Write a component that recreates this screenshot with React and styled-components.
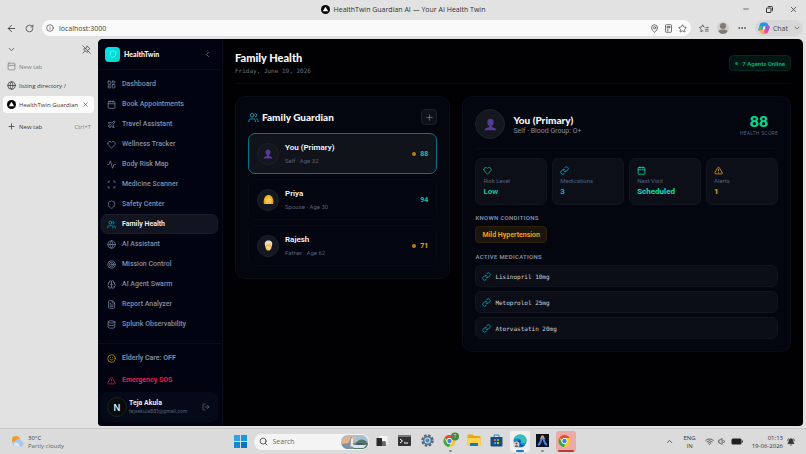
import React from "react";
import styled, { createGlobalStyle, css } from "styled-components";
import {
  Shield, ChevronLeft, ChevronDown, ChevronUp, LayoutDashboard, Calendar, Plane, Heart, Activity, Scan,
  Users, Globe, Target, Brain, FileText, Database, Smile, TriangleAlert, LogOut, Plus, Link,
  ArrowLeft, RotateCw, Info, MapPin, Star, Ellipsis, Minus, X, Search, Wifi, Volume1,
  PanelTop, BellRing,
} from "lucide-react";

const GlobalStyle = createGlobalStyle`
  * { box-sizing: border-box; }
  html, body { margin: 0; padding: 0; }
  body { background: #e3e2e2; font-family: Roboto, Inter, sans-serif; overflow: hidden; }
  button, input { font: inherit; color: inherit; border: 0; background: none; padding: 0; margin: 0; }
  h1, h2, h3, p, ul, dl, dd { margin: 0; padding: 0; }
  ul { list-style: none; }
  a { color: inherit; text-decoration: none; }
  svg { flex: none; display: block; }
`;

const system = css`font-family: "Open Sans", "Noto Sans", sans-serif;`;
const display = css`font-family: Lato, Inter, sans-serif; font-weight: 900;`;
const mono = css`font-family: "DejaVu Sans Mono", "Liberation Mono", monospace;`;

const Desktop = styled.div`
  min-height: 100vh;
  display: flex;
  flex-direction: column;
  color: #333;
`;

/* Browser window */
const TitleBar = styled.header`
  ${system}
  height: 18px;
  display: grid;
  grid-template-columns: 1fr auto 1fr;
  align-items: center;
`;
const WindowTitle = styled.div`
  grid-column: 2;
  display: flex;
  align-items: center;
  gap: 4px;
  font-size: 7px;
  color: #303030;
`;
const WindowButtons = styled.div`
  display: flex;
  justify-content: flex-end;
  align-items: center;
  gap: 16px;
  padding-right: 8px;
  color: #333;
`;
const IconButton = styled.button`
  display: inline-flex;
  align-items: center;
  justify-content: center;
  flex: none;
  color: inherit;
`;
const Toolbar = styled.div`
  ${system}
  height: 21px;
  display: flex;
  align-items: center;
  gap: 8px;
  padding: 1px 3px 2px 6px;
  color: #444;
`;
const AddressBar = styled.div`
  flex: 1;
  height: 16px;
  display: flex;
  align-items: center;
  gap: 5px;
  padding: 0 4px;
  border-radius: 8px;
  background: #fafafa;
  font-size: 7px;
`;
const AddressInput = styled.input`
  flex: 1;
  min-width: 0;
  outline: 0;
  color: #444;
`;
const Profile = styled.span`
  width: 12px;
  height: 12px;
  border-radius: 50%;
  background: #cfcccb;
`;
const ChatButton = styled.button`
  height: 16px;
  display: flex;
  align-items: center;
  gap: 3px;
  padding: 0 2px 0 3px;
  border-radius: 8px;
  background: #d8d7d8;
  font-size: 7px;
  color: #444;
`;
const ChatLabel = styled.span`margin-right: 2px;`;

const BrowserBody = styled.div`
  flex: 1;
  min-height: 0;
  display: flex;
  padding-right: 3px;
`;
const TabPane = styled.aside`
  ${system}
  width: 98px;
  flex: none;
  padding: 2px 3px 0;
  font-size: 6px;
`;
const TabPaneTop = styled.div`
  display: flex;
  justify-content: space-between;
  align-items: center;
  height: 17px;
  padding: 0 4px;
  color: #444;
`;
const Tab = styled.button`
  width: 91px;
  height: 17px;
  display: flex;
  align-items: center;
  gap: 3px;
  padding: 0 5px 0 4px;
  margin-bottom: 2px;
  border-radius: 4px;
  color: ${(p) => (p.$faded ? "#808080" : "#383838")};
  background: ${(p) => (p.$active ? "#fcfcfc" : "transparent")};
`;
const TabLabel = styled.span`
  flex: 1;
  text-align: left;
  white-space: nowrap;
`;
const Shortcut = styled.span`color: #808080;`;
const NewTab = styled(Tab)`
  margin-top: 5px;
  padding-right: 3px;
`;

/* Application */
const AppFrame = styled.div`
  flex: 1;
  min-width: 0;
  display: flex;
  background: #010103;
  border-radius: 5px 5px 4px 4px;
  overflow: hidden;
  margin-bottom: 2px;
`;
const SideNav = styled.nav`
  width: 125px;
  flex: none;
  display: flex;
  flex-direction: column;
  background: #010311;
  border-right: 1px solid #080b17;
`;
const Brand = styled.div`
  height: 31px;
  display: flex;
  align-items: center;
  gap: 4px;
  padding: 0 10px 0 7px;
  border-bottom: 1px solid #090c1a;
  color: #6b778c;
`;
const BrandMark = styled.span`
  width: 15px;
  height: 15px;
  display: grid;
  place-items: center;
  border-radius: 4px;
  color: #8afaf4;
  background: linear-gradient(135deg, #00e1f2, #00dbc4);
`;
const BrandName = styled.span`
  ${display}
  flex: 1;
  font-size: 7px;
  color: #f4f6fb;
`;
const NavList = styled.ul`
  padding: 4px 4px 0 3px;
  flex: 1;
`;
const NavLink = styled.a`
  height: 20px;
  display: flex;
  align-items: center;
  gap: 6px;
  padding: 0 5px;
  border: 1px solid ${(p) => (p.$active ? "#1a1d29" : "transparent")};
  border-radius: 6px;
  background: ${(p) => (p.$active ? "#12151f" : "transparent")};
  color: ${(p) => (p.$active ? "#eff2f8" : "#8290a7")};
  font-size: 7px;
  line-height: 10px;
  font-weight: ${(p) => (p.$active ? 600 : 500)};
  svg { color: ${(p) => (p.$active ? "#06a9c4" : "#76849b")}; }
`;
const NavFooter = styled.div`
  border-top: 1px solid #090c1a;
  padding: 3px 4px 4px 3px;
`;
const FooterAction = styled.button`
  width: 100%;
  height: 22px;
  display: flex;
  align-items: center;
  gap: 6px;
  padding: 0 6px;
  font-size: 7px;
  font-weight: ${(p) => (p.$alert ? 700 : 600)};
  color: ${(p) => (p.$alert ? "#f0174e" : "#8290a7")};
  svg { color: ${(p) => (p.$alert ? "#d81745" : "#d39a0c")}; }
`;
const UserCard = styled.div`
  height: 30px;
  display: flex;
  align-items: center;
  gap: 2px;
  padding: 0 8px 0 6px;
  margin-top: 1px;
  border-radius: 6px;
  background: #060a18;
  color: #647087;
`;
const UserBadge = styled.span`
  width: 20px;
  height: 20px;
  flex: none;
  display: grid;
  place-items: center;
  border-radius: 50%;
  border: 1px solid #1c2420;
  background: #080b09;
  color: #fff;
  font-family: Inter, sans-serif;
  font-size: 9px;
  font-weight: 500;
`;
const UserText = styled.div`
  flex: 1;
  min-width: 0;
  font-family: Inter, sans-serif;
  font-size: 5px;
  line-height: 8px;
  color: #56637c;
  white-space: nowrap;
`;
const UserName = styled.div`
  font-family: Roboto, sans-serif;
  font-size: 7px;
  font-weight: 600;
  color: #f3f5fa;
`;

const Main = styled.main`
  flex: 1;
  min-width: 0;
  padding: 0 12px;
`;
const PageHeader = styled.header`
  height: 45px;
  display: flex;
  justify-content: space-between;
  align-items: center;
  padding-top: 4px;
  border-bottom: 1px solid #080a11;
`;
const PageTitle = styled.h1`
  ${display}
  font-size: 11px;
  line-height: 14px;
  color: #f6f8fc;
`;
const PageDate = styled.p`
  ${mono}
  font-size: 6px;
  line-height: 11px;
  color: #647188;
`;
const OnlineBadge = styled.span`
  height: 16px;
  display: flex;
  align-items: center;
  gap: 4px;
  padding: 0 5px;
  border: 1px solid #032a20;
  border-radius: 4px;
  background: #011612;
  color: #05b57b;
  font-size: 6px;
  font-weight: 600;
`;
const Dot = styled.span`
  width: ${(p) => p.$size}px;
  height: ${(p) => p.$size}px;
  border-radius: 50%;
  background: ${(p) => p.$color};
`;
const Columns = styled.div`
  display: grid;
  grid-template-columns: 215fr 328fr;
  align-items: start;
  gap: 12px;
  padding-top: 12px;
`;
const Panel = styled.section`
  padding: 12px;
  border: 1px solid #0a0d1a;
  border-radius: 10px;
  background: #04060f;
`;
const PanelHeader = styled.div`
  display: flex;
  align-items: center;
  gap: 3px;
  height: 16px;
  margin-bottom: 8px;
  color: #06a9c4;
`;
const PanelTitle = styled.h2`
  ${display}
  flex: 1;
  font-size: 10px;
  line-height: 14px;
  color: #f4f6fb;
`;
const AddButton = styled(IconButton)`
  width: 16px;
  height: 16px;
  border: 1px solid #191d28;
  border-radius: 4px;
  background: #0e111b;
  color: #06a9c4;
`;
const MemberList = styled.div`
  display: flex;
  flex-direction: column;
  gap: 5px;
`;
const MemberRow = styled.button`
  width: 100%;
  height: 41px;
  display: flex;
  align-items: center;
  gap: 6px;
  padding: 0 8px;
  border: 1px solid ${(p) => (p.$selected ? "#087387" : "#080b14")};
  border-radius: 7px;
  background: ${(p) => (p.$selected ? "#11131b" : "#030510")};
  text-align: left;
`;
const Avatar = styled.span`
  width: ${(p) => p.$size}px;
  height: ${(p) => p.$size}px;
  flex: none;
  display: grid;
  place-items: center;
  border: 1px solid #20222b;
  border-radius: 50%;
  background: #15171f;
`;
const MemberText = styled.span`
  flex: 1;
  font-size: 6px;
  color: #566177;
`;
const MemberName = styled.span`
  display: block;
  margin-bottom: 4px;
  font-size: 8px;
  line-height: 10px;
  font-weight: 600;
  color: #f5f7fb;
`;
const Score = styled.span`
  display: flex;
  align-items: center;
  gap: 4px;
  font-size: 7px;
  font-weight: 800;
  color: ${(p) => p.$color};
`;
const ProfileHeader = styled.div`
  height: 40px;
  display: flex;
  align-items: flex-start;
  gap: 8px;
  border-bottom: 1px solid #080b14;
`;
const ProfileText = styled.div`
  flex: 1;
  padding-top: 5px;
`;
const ProfileName = styled(PanelTitle)`line-height: 13px;`;
const ProfileMeta = styled.p`
  font-size: 7px;
  line-height: 9px;
  color: #8490a6;
`;
const HealthScore = styled.div`
  padding-top: 4px;
  text-align: center;
  font-size: 5px;
  line-height: 7px;
  letter-spacing: 0.05em;
  color: #566177;
`;
const ScoreNumber = styled.div`
  font-family: Inter, sans-serif;
  font-size: 14px;
  line-height: 17px;
  font-weight: 800;
  letter-spacing: normal;
  color: #0ad08e;
`;
const StatGrid = styled.dl`
  display: grid;
  grid-template-columns: repeat(4, 1fr);
  gap: 5px;
  padding-top: 9px;
`;
const Stat = styled.div`
  height: 47px;
  padding: 7px;
  border: 1px solid #11141e;
  border-radius: 6px;
  background: #0c0f18;
  color: ${(p) => p.$color};
`;
const StatLabel = styled.dt`
  margin-top: 2px;
  font-size: 6px;
  line-height: 8px;
  color: #566177;
`;
const StatValue = styled.dd`
  margin-top: 1px;
  font-size: 8px;
  line-height: 11px;
  font-weight: 700;
`;
const SectionTitle = styled.h3`
  margin: ${(p) => p.$top}px 0 4px;
  font-size: 6px;
  line-height: 8px;
  font-weight: 600;
  letter-spacing: 0.05em;
  color: #8490a6;
`;
const Condition = styled.div`
  width: fit-content;
  display: flex;
  align-items: center;
  height: 17px;
  padding: 0 6px;
  border: 1px solid #302109;
  border-radius: 4px;
  background: #1c150e;
  color: #f2ab0c;
  font-size: 7px;
  font-weight: 600;
`;
const MedicationList = styled.ul`
  display: grid;
  gap: 4px;
`;
const Medication = styled.li`
  ${mono}
  height: 22px;
  display: flex;
  align-items: center;
  gap: 4px;
  padding: 0 6px;
  border: 1px solid #11141e;
  border-radius: 6px;
  background: #0b0e17;
  color: #ccd3df;
  font-size: 6px;
  svg { color: #08aecb; }
`;

/* Taskbar */
const Taskbar = styled.footer`
  ${system}
  height: 26px;
  display: grid;
  grid-template-columns: 1fr auto 1fr;
  align-items: center;
  padding: 0 11px;
  background: #dcdbdb;
  border-top: 1px solid #cbc8ca;
  font-size: 6px;
  line-height: 8px;
`;
const Weather = styled.div`
  display: flex;
  align-items: center;
  gap: 3px;
  color: #333;
`;
const Muted = styled.div`color: #666;`;
const TaskItems = styled.div`
  display: flex;
  align-items: center;
  gap: 3px;
`;
const TaskButton = styled(IconButton)`
  width: 20px;
  height: 21px;
  flex-direction: column;
  justify-content: flex-end;
  border-radius: 3px;
  background: ${(p) => p.$fill || "transparent"};
`;
const TaskGlyph = styled.span`
  flex: 1;
  display: grid;
  place-items: center;
`;
const TaskMark = styled.span`
  width: ${(p) => p.$width || 0}px;
  height: 2px;
  border-radius: 1px;
  background: ${(p) => p.$color || "transparent"};
`;
const TaskSearch = styled.label`
  width: 115px;
  height: 16px;
  display: flex;
  align-items: center;
  gap: 5px;
  padding: 0 1px 0 5px;
  border-radius: 8px;
  background: #f5f4f4;
  color: #333;
  font-size: 7px;
`;
const TaskSearchInput = styled.input`
  flex: 1;
  min-width: 0;
  outline: 0;
  &::placeholder { color: #666; opacity: 1; }
`;
const Tray = styled.div`
  display: flex;
  justify-content: flex-end;
  align-items: center;
  gap: 4px;
  color: #333;
`;
const Language = styled.div`
  text-align: center;
  padding: 0 5px;
`;
const Clock = styled.div`
  text-align: right;
  padding-left: 5px;
`;

/* Drawings */
const Triangle = ({ size = 9 }) => (
  <svg width={size} height={size} viewBox="0 0 20 20">
    <circle cx="10" cy="10" r="10" fill="#050505" />
    <path d="M10 4l6 10H4z" fill="#fff" />
  </svg>
);
const Unpin = () => (
  <svg width="9" height="9" viewBox="0 0 24 24" fill="none" stroke="currentColor" strokeWidth="2" strokeLinejoin="round" strokeLinecap="round">
    <path d="M2 2l20 20M14 3l7 7-6 4-2 6-9-9 6-2zM8 16l-6 6" />
  </svg>
);
const Restore = () => (
  <svg width="7" height="7" viewBox="0 0 14 14" fill="none" stroke="currentColor" strokeWidth="2">
    <rect x="1" y="4" width="9" height="9" rx="1" /><path d="M4 2q0-1 1-1h6q2 0 2 2v6q0 1-1 1" />
  </svg>
);
const Reader = () => (
  <svg width="9" height="9" viewBox="0 0 24 24" fill="none" stroke="currentColor" strokeWidth="2">
    <rect x="4" y="2" width="16" height="20" rx="2" /><path d="M8 7h8v3H8zM8 14h4M8 18h4" />
  </svg>
);
const Favorites = () => (
  <svg width="10" height="9" viewBox="0 0 27 24" fill="none" stroke="currentColor" strokeWidth="2" strokeLinejoin="round">
    <path d="M15 9l-2-1-3-6-3 6-6 1 5 5-1 7 5-3 2 1M18 9h8M16 14h10M16 19h10" />
  </svg>
);
const Person = ({ size }) => (
  <svg width={size} height={size} viewBox="0 0 20 20" fill="#553a96">
    <path d="M10 1c3 0 5 2 5 5 0 2-1 5-3 6v2c3 1 6 1 7 5H1c1-4 4-4 7-5v-2c-2-1-3-4-3-6 0-3 2-5 5-5z" />
  </svg>
);
const Woman = () => (
  <svg width="11" height="11" viewBox="0 0 22 22">
    <path d="M2 20c-2-5 0-18 9-18s11 12 9 18z" fill="#e7a61b" />
    <ellipse cx="11" cy="13" rx="6" ry="7" fill="#ffd15b" />
    <path d="M4 11c4 0 7-2 8-5 1 3 3 4 6 5-1-6-3-8-7-8s-7 3-7 8z" fill="#f1b52a" />
    <path d="M8 12v1M14 12v1M9 17q2 1 4 0" stroke="#9c5a20" fill="none" />
  </svg>
);
const Elder = () => (
  <svg width="11" height="11" viewBox="0 0 22 22">
    <path d="M4 11C2 4 6 1 11 1s9 3 7 10l-2 3H6z" fill="#e7dfd4" />
    <path d="M5 9c2 0 4-3 6-3s4 3 6 3c1 8-2 12-6 12S4 17 5 9z" fill="#f7c873" />
    <path d="M8 11v1M14 11v1" stroke="#8b5520" fill="none" />
    <path d="M8 16q3-2 6 0" stroke="#f3e7d6" strokeWidth="2" fill="none" />
  </svg>
);
const ProfileIcon = () => (
  <svg width="12" height="12" viewBox="0 0 24 24" fill="#817b78">
    <circle cx="12" cy="8" r="6" /><path d="M3 19q0-4 9-4t9 4q-4 5-9 5t-9-5z" />
  </svg>
);
const Copilot = () => (
  <svg width="12" height="12" viewBox="0 0 24 24">
    <path d="M8 1h8q3 0 4 4l1 3h-5q-3 0-4 4l-2 6H4q-4 0-3-5L4 4q1-3 4-3z" fill="#2c92e5" />
    <path d="M2 12l1-4h5l-1 10H4q-4 0-2-6z" fill="#4ebc78" />
    <path d="M16 23H9q-4 0-4-4l-1-3h5q3 0 4-4l2-5h5q4 0 3 5l-3 8q-1 3-4 3z" fill="#e94e9a" />
    <path d="M4 16h5q3 0 4-4l-1 11H9q-4 0-5-7z" fill="#ffb33e" />
    <path d="M16 7h4q4 0 3 5l-2 5-6-2z" fill="#9b59dd" />
    <path d="M11 9h4l-2 6H9z" fill="#fff" />
  </svg>
);
const CloudSun = () => (
  <svg width="14" height="14" viewBox="0 0 28 28">
    <circle cx="10" cy="10" r="8" fill="#f29c25" />
    <path d="M8 23a5 5 0 010-10 7 7 0 0113-1 6 6 0 011 11z" fill="#a8c8ec" />
    <path d="M8 23a5 5 0 010-8q7-1 10 8z" fill="#dbe9f7" />
  </svg>
);
const WindowsLogo = () => (
  <svg width="13" height="13" viewBox="0 0 26 26">
    <path d="M0 0h12v12H0z" fill="#2aa5e6" /><path d="M14 0h12v12H14z" fill="#159add" />
    <path d="M0 14h12v12H0z" fill="#128bd6" /><path d="M14 14h12v12H14z" fill="#0b73c5" />
  </svg>
);
const SearchScene = () => (
  <svg width="27" height="14" viewBox="0 0 54 28">
    <rect width="54" height="28" rx="13" fill="#a7bfd5" />
    <path d="M2 20Q1 3 14 2l16 2-9 14z" fill="#e1b58b" />
    <path d="M1 18l14-2 6-13 3 13 8-2v14H14Q4 28 1 18z" fill="#8090aa" />
    <path d="M20 7h4v16h-5z" fill="#f1e9db" />
    <path d="M29 18q4-9 12-9t13 8q-1 10-12 11H24z" fill="#53776b" />
    <path d="M20 20h31l-6 6H26z" fill="#dbe4e8" /><path d="M32 16h13l3 4H30z" fill="#455f74" />
  </svg>
);
const TaskView = () => (
  <svg width="12" height="12" viewBox="0 0 24 24">
    <path d="M7 2h16v16H7z" fill="#f6f5f5" /><path d="M1 6h11v7h7v9H1z" fill="#292929" />
    <path d="M12 13h7v9h-7z" fill="#666" />
  </svg>
);
const TerminalIcon = () => (
  <svg width="13" height="11" viewBox="0 0 26 22">
    <rect width="26" height="22" rx="2" fill="#303236" /><path d="M0 2q0-2 2-2h22q2 0 2 2v2H0z" fill="#777" />
    <path d="M4 8l5 4-5 4M12 16h8" stroke="#fff" strokeWidth="2" fill="none" />
  </svg>
);
const Gear = () => (
  <svg width="13" height="13" viewBox="0 0 26 26">
    <circle cx="13" cy="13" r="10" fill="none" stroke="#53677b" strokeWidth="5" strokeDasharray="5 2.85" />
    <circle cx="13" cy="13" r="9" fill="#5c7286" /><circle cx="13" cy="13" r="6" fill="#c8dff0" />
    <circle cx="13" cy="13" r="4" fill="#2f8fd8" />
  </svg>
);
const Chrome = ({ badge }) => (
  <svg width="17" height="17" viewBox="0 0 34 34">
    <circle cx="15" cy="18" r="12" fill="#f6c72f" />
    <path d="M4.6 12A12 12 0 0125.4 12H15a6 6 0 00-5.2 3z" fill="#e64a3d" />
    <path d="M4.6 12L9.8 21a6 6 0 006 3L14 30A12 12 0 014.6 12z" fill="#36a853" />
    <circle cx="15" cy="18" r="6" fill="#fff" /><circle cx="15" cy="18" r="4.5" fill="#4285e8" />
    {badge && <circle cx="26" cy="9" r="8" fill="#4d853d" />}
    {badge && <text x="26" y="12" fontSize="9" textAnchor="middle" fill="#d8ead2" fontFamily="Open Sans, sans-serif">T</text>}
  </svg>
);
const Folder = () => (
  <svg width="14" height="13" viewBox="0 0 28 26">
    <path d="M1 3q0-2 2-2h8l3 3h11q2 0 2 2v17H1z" fill="#e9a717" />
    <path d="M1 8h26v14q0 2-2 2H3q-2 0-2-2z" fill="#ffd34f" /><path d="M6 18h16v6H6z" fill="#1879bf" />
  </svg>
);
const Store = () => (
  <svg width="13" height="13" viewBox="0 0 26 26">
    <path d="M8 7V2h10v5" fill="none" stroke="#258bc5" strokeWidth="2" />
    <path d="M1 6h24v16q0 3-3 3H4q-3 0-3-3z" fill="#164e7c" />
    <path d="M8 10h4v4H8z" fill="#ed5a38" /><path d="M14 10h4v4h-4z" fill="#76b837" />
    <path d="M8 16h4v4H8z" fill="#29a9e0" /><path d="M14 16h4v4h-4z" fill="#f5b82e" />
  </svg>
);
const Edge = () => (
  <svg width="14" height="14" viewBox="0 0 28 28">
    <circle cx="14" cy="14" r="13" fill="#1685ce" />
    <path d="M2 11Q5 1 15 1c9 0 13 7 12 13-1 5-9 6-11 3 3-7-7-10-14-6z" fill="#35c1ba" />
    <path d="M10 13q-4 8 5 12 6 2 9-3-5 2-8-1-4-3 0-6-2-4-6-2z" fill="#0d529b" />
    <circle cx="7" cy="21" r="6" fill="#d6d1cc" /><circle cx="7" cy="19" r="2" fill="#65605c" />
    <path d="M3 25q4-5 8 0-4 3-8 0z" fill="#65605c" />
  </svg>
);
const Arch = () => (
  <svg width="13" height="13" viewBox="0 0 26 26">
    <path d="M0 0h26v26H0z" fill="#10131e" />
    <path d="M4 22q5-2 7-13 2-6 4 0 2 11 7 13" fill="none" stroke="#4488ed" strokeWidth="4" />
    <path d="M10 10q1-6 3-6t3 6" fill="none" stroke="#ed9d58" strokeWidth="3" />
  </svg>
);
const Battery = () => (
  <svg width="12" height="7" viewBox="0 0 24 14">
    <rect x="1" y="1" width="20" height="12" rx="3" fill="#202020" /><path d="M22 5h2v4h-2z" fill="#333" />
  </svg>
);

const NAV = [
  ["Dashboard", LayoutDashboard], ["Book Appointments", Calendar], ["Travel Assistant", Plane],
  ["Wellness Tracker", Heart], ["Body Risk Map", Activity], ["Medicine Scanner", Scan],
  ["Safety Center", Shield], ["Family Health", Users], ["AI Assistant", Globe],
  ["Mission Control", Target], ["AI Agent Swarm", Brain], ["Report Analyzer", FileText],
  ["Splunk Observability", Database],
];
const MEMBERS = [
  { name: "You (Primary)", meta: "Self · Age 32", score: 88, color: "#06c488", warn: true, face: <Person size={10} /> },
  { name: "Priya", meta: "Spouse · Age 30", score: 94, color: "#06c488", face: <Woman /> },
  { name: "Rajesh", meta: "Father · Age 62", score: 71, color: "#e6a00c", warn: true, face: <Elder /> },
];
const STATS = [
  ["Risk Level", "Low", "#08c987", Heart], ["Medications", "3", "#08b3d1", Link],
  ["Next Visit", "Scheduled", "#0be0b0", Calendar], ["Alerts", "1", "#eea60e", TriangleAlert],
];
const TASKS = [
  { label: "Task view", icon: <TaskView /> },
  { label: "Terminal", icon: <TerminalIcon /> },
  { label: "Settings", icon: <Gear /> },
  { label: "Chrome profile", icon: <Chrome badge />, mark: "#8b8989", width: 3 },
  { label: "File Explorer", icon: <Folder /> },
  { label: "Store", icon: <Store /> },
  { label: "Edge", icon: <Edge />, mark: "#2478b8", width: 8, fill: "#f0f0f0" },
  { label: "Antigravity", icon: <Arch />, mark: "#8b8989", width: 3 },
  { label: "Chrome", icon: <Chrome />, mark: "#c33831", width: 16, fill: "#ecaaa7" },
];

function Sidebar() {
  return (
    <SideNav aria-label="Main">
      <Brand>
        <BrandMark><Shield size={8} /></BrandMark>
        <BrandName>HealthTwin</BrandName>
        <IconButton aria-label="Collapse sidebar"><ChevronLeft size={9} /></IconButton>
      </Brand>
      <NavList>
        {NAV.map(([label, Icon]) => (
          <li key={label}>
            <NavLink href="#" $active={label === "Family Health"}><Icon size={9} />{label}</NavLink>
          </li>
        ))}
      </NavList>
      <NavFooter>
        <FooterAction><Smile size={9} />Elderly Care: OFF</FooterAction>
        <FooterAction $alert><TriangleAlert size={9} />Emergency SOS</FooterAction>
        <UserCard>
          <UserBadge>N</UserBadge>
          <UserText><UserName>Teja Akula</UserName>tejaakula881@gmail.com</UserText>
          <IconButton aria-label="Log out"><LogOut size={8} /></IconButton>
        </UserCard>
      </NavFooter>
    </SideNav>
  );
}

function FamilyPanel() {
  return (
    <Panel>
      <PanelHeader>
        <Users size={11} />
        <PanelTitle>Family Guardian</PanelTitle>
        <AddButton aria-label="Add member"><Plus size={9} /></AddButton>
      </PanelHeader>
      <MemberList>
        {MEMBERS.map((m, i) => (
          <MemberRow key={m.name} $selected={i === 0}>
            <Avatar $size={22}>{m.face}</Avatar>
            <MemberText><MemberName>{m.name}</MemberName>{m.meta}</MemberText>
            <Score $color={m.color}>{m.warn && <Dot $size={4} $color="#b58013" />}{m.score}</Score>
          </MemberRow>
        ))}
      </MemberList>
    </Panel>
  );
}

function DetailPanel() {
  return (
    <Panel>
      <ProfileHeader>
        <Avatar $size={30}><Person size={13} /></Avatar>
        <ProfileText>
          <ProfileName>You (Primary)</ProfileName>
          <ProfileMeta>Self · Blood Group: O+</ProfileMeta>
        </ProfileText>
        <HealthScore><ScoreNumber>88</ScoreNumber>HEALTH SCORE</HealthScore>
      </ProfileHeader>
      <StatGrid>
        {STATS.map(([label, value, color, Icon]) => (
          <Stat key={label} $color={color}>
            <Icon size={9} />
            <StatLabel>{label}</StatLabel>
            <StatValue>{value}</StatValue>
          </Stat>
        ))}
      </StatGrid>
      <SectionTitle $top={9}>KNOWN CONDITIONS</SectionTitle>
      <Condition>Mild Hypertension</Condition>
      <SectionTitle $top={10}>ACTIVE MEDICATIONS</SectionTitle>
      <MedicationList>
        {["Lisinopril 10mg", "Metoprolol 25mg", "Atorvastatin 20mg"].map((name) => (
          <Medication key={name}><Link size={9} />{name}</Medication>
        ))}
      </MedicationList>
    </Panel>
  );
}

export default function App() {
  return (
    <>
      <GlobalStyle />
      <Desktop>
        <TitleBar>
          <WindowTitle><Triangle />HealthTwin Guardian AI — Your AI Health Twin</WindowTitle>
          <WindowButtons>
            <IconButton aria-label="Minimize"><Minus size={8} /></IconButton>
            <IconButton aria-label="Restore"><Restore /></IconButton>
            <IconButton aria-label="Close"><X size={9} /></IconButton>
          </WindowButtons>
        </TitleBar>
        <Toolbar>
          <IconButton aria-label="Back"><ArrowLeft size={11} /></IconButton>
          <IconButton aria-label="Reload"><RotateCw size={9} /></IconButton>
          <AddressBar>
            <Info size={8} />
            <AddressInput aria-label="Address" defaultValue="localhost:3000" />
            <MapPin size={9} /><Reader /><Star size={9} />
          </AddressBar>
          <IconButton aria-label="Favorites"><Favorites /></IconButton>
          <IconButton aria-label="Profile"><Profile><ProfileIcon /></Profile></IconButton>
          <IconButton aria-label="More"><Ellipsis size={10} /></IconButton>
          <ChatButton><Copilot /><ChatLabel>Chat</ChatLabel><ChevronDown size={8} /></ChatButton>
        </Toolbar>
        <BrowserBody>
          <TabPane>
            <TabPaneTop>
              <ChevronDown size={9} />
              <IconButton aria-label="Unpin pane"><Unpin /></IconButton>
            </TabPaneTop>
            <Tab $faded><PanelTop size={9} /><TabLabel>New tab</TabLabel></Tab>
            <Tab><Globe size={9} /><TabLabel>listing directory /</TabLabel></Tab>
            <Tab $active><Triangle /><TabLabel>HealthTwin Guardian</TabLabel><X size={7} /></Tab>
            <NewTab><Plus size={9} /><TabLabel>New tab</TabLabel><Shortcut>Ctrl+T</Shortcut></NewTab>
          </TabPane>
          <AppFrame>
            <Sidebar />
            <Main>
              <PageHeader>
                <div>
                  <PageTitle>Family Health</PageTitle>
                  <PageDate>Friday, June 19, 2026</PageDate>
                </div>
                <OnlineBadge><Dot $size={3} $color="#078258" />7 Agents Online</OnlineBadge>
              </PageHeader>
              <Columns><FamilyPanel /><DetailPanel /></Columns>
            </Main>
          </AppFrame>
        </BrowserBody>
        <Taskbar>
          <Weather><CloudSun /><div>30°C<Muted>Partly cloudy</Muted></div></Weather>
          <TaskItems>
            <TaskButton aria-label="Start"><TaskGlyph><WindowsLogo /></TaskGlyph></TaskButton>
            <TaskSearch><Search size={9} /><TaskSearchInput aria-label="Search" placeholder="Search" /><SearchScene /></TaskSearch>
            {TASKS.map((t) => (
              <TaskButton key={t.label} aria-label={t.label} $fill={t.fill}>
                <TaskGlyph>{t.icon}</TaskGlyph>
                <TaskMark $color={t.mark} $width={t.width} />
              </TaskButton>
            ))}
          </TaskItems>
          <Tray>
            <ChevronUp size={9} />
            <Language>ENG<br />IN</Language>
            <Wifi size={9} /><Volume1 size={9} /><Battery />
            <Clock>01:13<br />19-06-2026</Clock>
            <BellRing size={8} fill="#333" />
          </Tray>
        </Taskbar>
      </Desktop>
    </>
  );
}
